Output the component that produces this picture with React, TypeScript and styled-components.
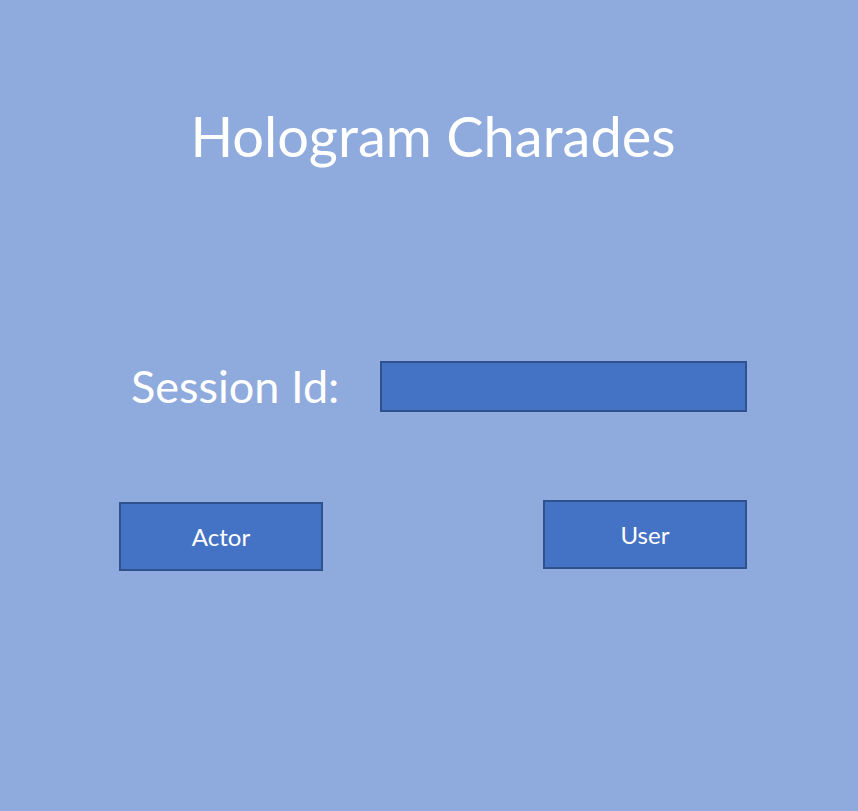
import React from "react";
import styled, { createGlobalStyle } from "styled-components";

const Global = createGlobalStyle`
  html, body { margin: 0; padding: 0; }
  body {
    background: #8faadc;
    font-family: Lato, "Open Sans", "Liberation Sans", sans-serif;
  }
`;

const Page = styled.div`
  width: 858px;
  height: 811px;
  background: #8faadc;
  display: flex;
  flex-direction: column;
  overflow: hidden;
`;

const Title = styled.h1`
  margin: 108px 0 0 8px;
  font-size: 56px;
  line-height: 56px;
  font-weight: 400;
  color: #ffffff;
  text-align: center;
`;

const SessionRow = styled.div`
  display: flex;
  align-items: center;
  margin: 197px 0 0 131px;
`;

const Label = styled.label`
  width: 249px;
  font-size: 45px;
  line-height: 51px;
  color: #ffffff;
`;

const Field = styled.input`
  box-sizing: border-box;
  width: 367px;
  height: 51px;
  border: 2px solid #2f528f;
  background: #4472c4;
  color: #ffffff;
  font-family: inherit;
  font-size: 24px;
  padding: 0 10px;
  outline: none;
`;

const ButtonRow = styled.div`
  display: flex;
  align-items: flex-start;
  gap: 220px;
  margin: 88px 0 0 119px;
`;

const RoleButton = styled.button<{ $offset?: number }>`
  box-sizing: border-box;
  width: 204px;
  height: 69px;
  margin-top: ${(p) => p.$offset ?? 0}px;
  border: 2px solid #2f528f;
  background: #4472c4;
  color: #ffffff;
  font-family: inherit;
  font-size: 24px;
  padding: 0;
  cursor: pointer;
`;

export default function App() {
  return (
    <Page>
      <Global />
      <Title>Hologram Charades</Title>
      <SessionRow>
        <Label htmlFor="sid">Session Id:</Label>
        <Field id="sid" type="text" />
      </SessionRow>
      <ButtonRow>
        <RoleButton $offset={2}>Actor</RoleButton>
        <RoleButton>User</RoleButton>
      </ButtonRow>
    </Page>
  );
}
